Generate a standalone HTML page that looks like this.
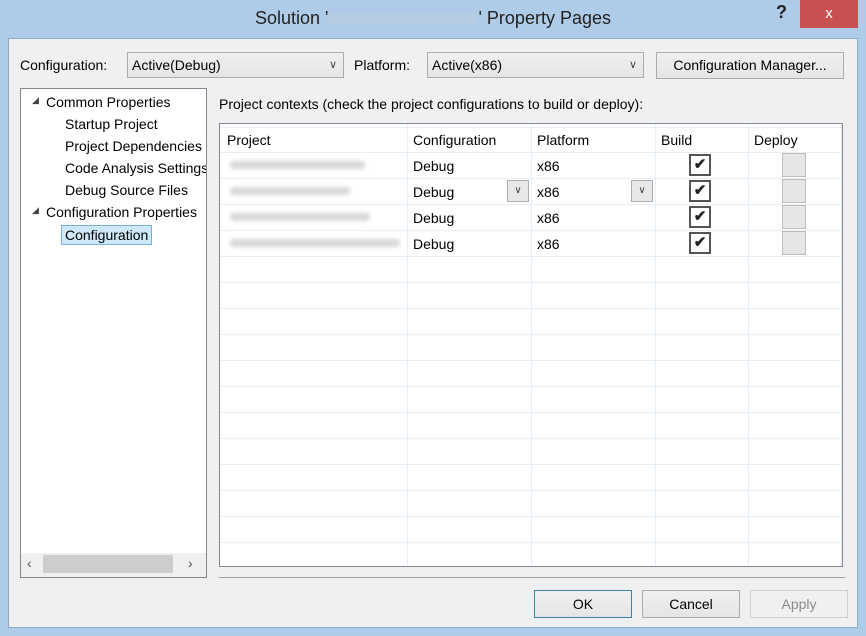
<!DOCTYPE html>
<html><head><style>
body{margin:0;width:866px;height:636px;background:#aecbe8;font-family:"Liberation Sans",sans-serif;font-size:14px;color:#000;position:relative;overflow:hidden}
.a{position:absolute}
.client{left:8px;top:38px;width:850px;height:590px;background:#f0f0f0;border:1px solid #8fa9c4;box-sizing:border-box}
.dd{border:1px solid #acacac;background:linear-gradient(#f0f0f0,#e5e5e5);box-sizing:border-box;height:26px;line-height:24px;padding-left:4px}
.dd .ar{position:absolute;right:6px;top:0;font-size:11px;color:#444}
.btn{border:1px solid #acacac;background:linear-gradient(#f0f0f0,#e5e5e5);box-sizing:border-box;text-align:center;height:28px;line-height:26px}
.grid{left:219px;top:123px;width:624px;height:444px;border:1px solid #828790;background:#fff;box-sizing:border-box}
.hl{position:absolute;left:0;width:622px;height:1px;background:#e6eef7}
.vl{position:absolute;top:0;width:1px;height:442px;background:#e6eef7}
.t{position:absolute;white-space:nowrap}
.cb{position:absolute;width:22px;height:22px;border:2px solid #555;box-sizing:border-box;background:#fff;font-size:15px;text-align:center;line-height:18px;font-weight:bold;color:#222}
.cbd{position:absolute;width:24px;height:24px;border:1px solid #bcbcbc;box-sizing:border-box;background:#e6e6e6}
.blur{position:absolute;height:8px;background:#d8d8d8;filter:blur(2px);border-radius:3px}
.sdd{position:absolute;width:22px;height:22px;border:1px solid #acacac;background:#e8e8e8;box-sizing:border-box;font-size:10px;text-align:center;line-height:20px;color:#444}
</style></head><body>
<div class="a" style="left:0;top:8px;width:866px;text-align:center;font-size:18px;color:#222">Solution '<span style="display:inline-block;width:150px;height:10px;background:#b8cde2;filter:blur(2px);vertical-align:middle"></span>' Property Pages</div>
<div class="a" style="left:776px;top:2px;font-size:18px;font-weight:bold;color:#222">?</div>
<div class="a" style="left:800px;top:0;width:58px;height:28px;background:#c75050;color:#fff;text-align:center;line-height:28px;font-size:15px">x</div>
<div class="a client"></div>
<div class="t" style="left:20px;top:57px">Configuration:</div>
<div class="a dd" style="left:127px;top:52px;width:217px">Active(Debug)<span class="ar">∨</span></div>
<div class="t" style="left:354px;top:57px">Platform:</div>
<div class="a dd" style="left:427px;top:52px;width:217px">Active(x86)<span class="ar">∨</span></div>
<div class="a btn" style="left:656px;top:52px;width:188px;height:27px;line-height:25px">Configuration Manager...</div>

<div class="a" style="left:20px;top:88px;width:187px;height:490px;border:1px solid #828790;background:#fff;box-sizing:border-box;overflow:hidden">
<div class="t" style="left:11px;top:6px;font-size:9px;color:#444">◢</div>
<div class="t" style="left:25px;top:5px">Common Properties</div>
<div class="t" style="left:44px;top:27px">Startup Project</div>
<div class="t" style="left:44px;top:49px">Project Dependencies</div>
<div class="t" style="left:44px;top:71px">Code Analysis Settings</div>
<div class="t" style="left:44px;top:93px">Debug Source Files</div>
<div class="t" style="left:11px;top:116px;font-size:9px;color:#444">◢</div>
<div class="t" style="left:25px;top:115px">Configuration Properties</div>
<div class="t" style="left:40px;top:136px;border:1px solid #7ab0d8;background:#cde8f8;padding:1px 3px">Configuration</div>
<div class="a" style="left:0;top:464px;width:185px;height:24px;background:#f0f0f0"></div>
<div class="a" style="left:22px;top:466px;width:130px;height:18px;background:#cdcdcd"></div>
<div class="t" style="left:6px;top:466px;color:#555">‹</div>
<div class="t" style="left:167px;top:466px;color:#555">›</div>
</div>

<div class="t" style="left:219px;top:96px">Project contexts (check the project configurations to build or deploy):</div>
<div class="a grid">
<div class="vl" style="left:187px"></div><div class="vl" style="left:311px"></div><div class="vl" style="left:435px"></div><div class="vl" style="left:528px"></div><div class="vl" style="left:621px"></div>
<div class="hl" style="top:3px"></div>
<div class="hl" style="top:28px"></div><div class="hl" style="top:54px"></div><div class="hl" style="top:80px"></div><div class="hl" style="top:106px"></div><div class="hl" style="top:132px"></div><div class="hl" style="top:158px"></div><div class="hl" style="top:184px"></div><div class="hl" style="top:210px"></div><div class="hl" style="top:236px"></div><div class="hl" style="top:262px"></div><div class="hl" style="top:288px"></div><div class="hl" style="top:314px"></div><div class="hl" style="top:340px"></div><div class="hl" style="top:366px"></div><div class="hl" style="top:392px"></div><div class="hl" style="top:418px"></div>
<div class="t" style="left:7px;top:8px">Project</div><div class="t" style="left:193px;top:8px">Configuration</div><div class="t" style="left:317px;top:8px">Platform</div><div class="t" style="left:441px;top:8px">Build</div><div class="t" style="left:534px;top:8px">Deploy</div>
<div class="blur" style="left:10px;top:37px;width:135px"></div>
<div class="blur" style="left:10px;top:63px;width:120px"></div>
<div class="blur" style="left:10px;top:89px;width:140px"></div>
<div class="blur" style="left:10px;top:115px;width:170px"></div>
<div class="t" style="left:193px;top:34px">Debug</div><div class="t" style="left:317px;top:34px">x86</div>
<div class="t" style="left:193px;top:60px">Debug</div><div class="t" style="left:317px;top:60px">x86</div>
<div class="t" style="left:193px;top:86px">Debug</div><div class="t" style="left:317px;top:86px">x86</div>
<div class="t" style="left:193px;top:112px">Debug</div><div class="t" style="left:317px;top:112px">x86</div>
<div class="sdd" style="left:287px;top:56px">∨</div><div class="sdd" style="left:411px;top:56px">∨</div>
<div class="cb" style="left:469px;top:30px">✔</div><div class="cb" style="left:469px;top:56px">✔</div><div class="cb" style="left:469px;top:82px">✔</div><div class="cb" style="left:469px;top:108px">✔</div>
<div class="cbd" style="left:562px;top:29px"></div><div class="cbd" style="left:562px;top:55px"></div><div class="cbd" style="left:562px;top:81px"></div><div class="cbd" style="left:562px;top:107px"></div>
</div>
<div class="a" style="left:219px;top:577px;width:626px;height:1px;background:#a0a0a0"></div>
<div class="a btn" style="left:534px;top:590px;width:98px;border-color:#3c7fb1">OK</div>
<div class="a btn" style="left:642px;top:590px;width:98px">Cancel</div>
<div class="a btn" style="left:750px;top:590px;width:98px;color:#8a8a8a;border-color:#d0d0d0;background:#f0f0f0">Apply</div>
</body></html>
